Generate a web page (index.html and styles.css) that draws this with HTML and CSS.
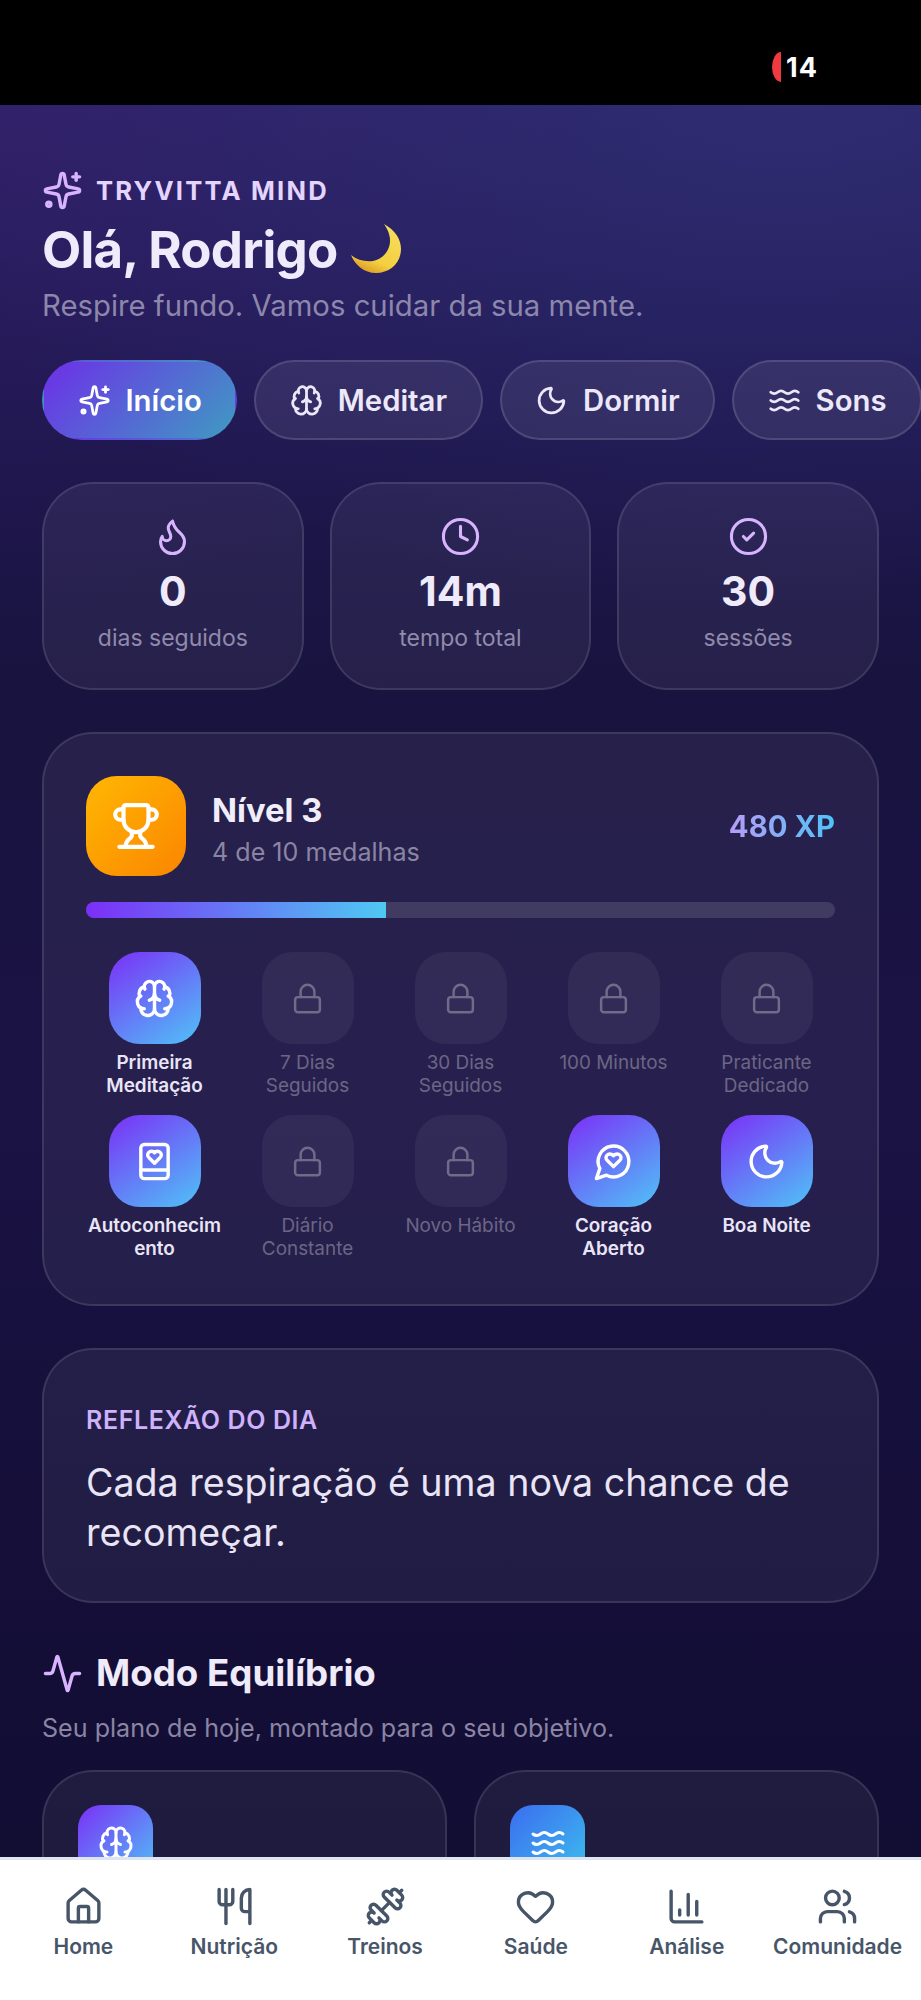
FILE: index.html
```html
<!DOCTYPE html>
<html lang="pt-BR">
<head>
<meta charset="utf-8">
<title>Tryvitta Mind</title>
<link rel="stylesheet" href="styles.css">
</head>
<body>
<svg class="sprite" aria-hidden="true">
  <symbol id="i-sparkles" viewBox="0 0 24 24"><path d="M11.017 2.814a1 1 0 0 1 1.966 0l1.051 5.558a2 2 0 0 0 1.594 1.594l5.558 1.051a1 1 0 0 1 0 1.966l-5.558 1.051a2 2 0 0 0-1.594 1.594l-1.051 5.558a1 1 0 0 1-1.966 0l-1.051-5.558a2 2 0 0 0-1.594-1.594l-5.558-1.051a1 1 0 0 1 0-1.966l5.558-1.051a2 2 0 0 0 1.594-1.594z"/><path d="M20 2v4"/><path d="M22 4h-4"/><circle cx="4" cy="20" r="1.2"/></symbol>
  <symbol id="i-brain" viewBox="0 0 24 24"><path d="M12 18V5"/><path d="M15 13a4.17 4.17 0 0 1-3-4 4.17 4.17 0 0 1-3 4"/><path d="M17.598 6.5A3 3 0 1 0 12 5a3 3 0 1 0-5.598 1.5"/><path d="M17.997 5.125a4 4 0 0 1 2.526 5.77"/><path d="M18 18a4 4 0 0 0 2-7.464"/><path d="M19.967 17.483A4 4 0 1 1 12 18a4 4 0 1 1-7.967-.517"/><path d="M6 18a4 4 0 0 1-2-7.464"/><path d="M6.003 5.125a4 4 0 0 0-2.526 5.77"/></symbol>
  <symbol id="i-moon" viewBox="0 0 24 24"><path d="M20.985 12.486a9 9 0 1 1-9.473-9.472c.405-.022.617.46.402.803a6 6 0 0 0 8.268 8.268c.344-.215.825-.004.803.401"/></symbol>
  <symbol id="i-waves" viewBox="0 0 24 24"><path d="M2 6c.6.5 1.2 1 2.5 1C7 7 7 5 9.5 5c2.6 0 2.4 2 5 2 2.5 0 2.5-2 5-2 1.3 0 1.9.5 2.5 1"/><path d="M2 12c.6.5 1.2 1 2.5 1 2.5 0 2.5-2 5-2 2.6 0 2.4 2 5 2 2.5 0 2.5-2 5-2 1.3 0 1.9.5 2.5 1"/><path d="M2 18c.6.5 1.2 1 2.5 1 2.5 0 2.5-2 5-2 2.6 0 2.4 2 5 2 2.5 0 2.5-2 5-2 1.3 0 1.9.5 2.5 1"/></symbol>
  <symbol id="i-flame" viewBox="0 0 24 24"><path d="M12 3q1 4 4 6.5t3 5.5a1 1 0 0 1-14 0 5 5 0 0 1 1-3 1 1 0 0 0 5 0c0-2-1.5-3-1.5-5q0-2 2.5-4"/></symbol>
  <symbol id="i-clock" viewBox="0 0 24 24"><circle cx="12" cy="12" r="10"/><path d="M12 6v6l4 2"/></symbol>
  <symbol id="i-check" viewBox="0 0 24 24"><circle cx="12" cy="12" r="10"/><path d="m9 12 2 2 4-4"/></symbol>
  <symbol id="i-trophy" viewBox="0 0 24 24"><path d="M10 14.66v1.626a2 2 0 0 1-.976 1.696A5 5 0 0 0 7 21.978"/><path d="M14 14.66v1.626a2 2 0 0 0 .976 1.696A5 5 0 0 1 17 21.978"/><path d="M18 9h1.5a1 1 0 0 0 0-5H18"/><path d="M4 22h16"/><path d="M6 9a6 6 0 0 0 12 0V3a1 1 0 0 0-1-1H7a1 1 0 0 0-1 1z"/><path d="M6 9H4.5a1 1 0 0 1 0-5H6"/></symbol>
  <symbol id="i-lock" viewBox="0 0 24 24"><rect width="18" height="11" x="3" y="11" rx="2" ry="2"/><path d="M7 11V7a5 5 0 0 1 10 0v4"/></symbol>
  <symbol id="i-book" viewBox="0 0 24 24"><rect x="4" y="2" width="16" height="20" rx="2"/><path d="M4 17h16"/><path d="M16 8.2A2.22 2.22 0 0 0 13.8 6c-.8 0-1.4.3-1.8.9-.4-.6-1-.9-1.8-.9A2.22 2.22 0 0 0 8 8.2c0 .6.3 1.2.8 1.6l3.2 3.2 3.2-3.2c.5-.4.8-1 .8-1.6Z"/></symbol>
  <symbol id="i-chat" viewBox="0 0 24 24"><path d="M7.9 20A9 9 0 1 0 4 16.1L2 22Z"/><path d="M16.4 9.8A2.22 2.22 0 0 0 14.2 7.6c-.9 0-1.6.4-2.2 1-.6-.6-1.3-1-2.2-1a2.22 2.22 0 0 0-2.2 2.2c0 .6.3 1.2.8 1.6l3.6 3.6 3.6-3.6c.5-.4.8-1 .8-1.6Z"/></symbol>
  <symbol id="i-activity" viewBox="0 0 24 24"><path d="M22 12h-2.48a2 2 0 0 0-1.93 1.46l-2.35 8.36a.25.25 0 0 1-.48 0L9.24 2.18a.25.25 0 0 0-.48 0l-2.35 8.36A2 2 0 0 1 4.49 12H2"/></symbol>
  <symbol id="i-house" viewBox="0 0 24 24"><path d="M15 21v-8a1 1 0 0 0-1-1h-4a1 1 0 0 0-1 1v8"/><path d="M3 10a2 2 0 0 1 .709-1.528l7-5.999a2 2 0 0 1 2.582 0l7 5.999A2 2 0 0 1 21 10v9a2 2 0 0 1-2 2H5a2 2 0 0 1-2-2z"/></symbol>
  <symbol id="i-utensils" viewBox="0 0 24 24"><path d="M3 2v7c0 1.1.9 2 2 2h4a2 2 0 0 0 2-2V2"/><path d="M7 2v20"/><path d="M21 15V2a5 5 0 0 0-5 5v6c0 1.1.9 2 2 2h3Zm0 0v7"/></symbol>
  <symbol id="i-dumbbell" viewBox="0 0 24 24"><path d="M17.596 12.768a2 2 0 1 0 2.829-2.829l-1.768-1.767a2 2 0 0 0 2.828-2.829l-2.828-2.828a2 2 0 0 0-2.829 2.828l-1.767-1.768a2 2 0 1 0-2.829 2.829z"/><path d="m2.5 21.5 1.4-1.4"/><path d="m20.1 3.9 1.4-1.4"/><path d="M5.343 21.485a2 2 0 1 0 2.829-2.828l1.767 1.768a2 2 0 1 0 2.829-2.829l-6.364-6.364a2 2 0 1 0-2.829 2.829l1.768 1.767a2 2 0 0 0-2.828 2.829z"/><path d="m9.6 14.4 4.8-4.8"/></symbol>
  <symbol id="i-heart" viewBox="0 0 24 24"><path d="M2 9.5a5.5 5.5 0 0 1 9.591-3.676.56.56 0 0 0 .818 0A5.49 5.49 0 0 1 22 9.5c0 2.29-1.5 4-3 5.5l-5.492 5.313a2 2 0 0 1-3 .019L5 15c-1.5-1.5-3-3.2-3-5.5"/></symbol>
  <symbol id="i-chart" viewBox="0 0 24 24"><path d="M3 3v16a2 2 0 0 0 2 2h16"/><path d="M18 17V9"/><path d="M13 17V5"/><path d="M8 17v-3"/></symbol>
  <symbol id="i-users" viewBox="0 0 24 24"><path d="M16 21v-2a4 4 0 0 0-4-4H6a4 4 0 0 0-4 4v2"/><path d="M16 3.128a4 4 0 0 1 0 7.744"/><path d="M22 21v-2a4 4 0 0 0-3-3.87"/><circle cx="9" cy="7" r="4"/></symbol>
  <linearGradient id="moon-fill" x1="0.7" y1="0.1" x2="0.3" y2="1"><stop offset="0" stop-color="#f6dc5a"/><stop offset="0.7" stop-color="#f5cf3f"/><stop offset="1" stop-color="#d99a26"/></linearGradient>
</svg>

<div class="app">
  <header class="status">
    <span class="status-rec"></span>
    <span class="status-num">14</span>
  </header>

  <main class="screen">
    <div class="eyebrow">
      <svg class="ic ic-lg"><use href="#i-sparkles"/></svg>
      <span>TRYVITTA MIND</span>
    </div>
    <h1 class="hello">Olá, Rodrigo<svg class="moon-emoji" viewBox="0 0 50 50" role="img" aria-label="lua"><path fill="url(#moon-fill)" d="M33 0C44 6 50 15 50 25C50 39 39 49 25 49C13 49 4 41 0 31C6 36 14 38 22 37C34 35 42 22 38 10C37 6 35 3 33 0Z"/></svg></h1>
    <p class="tagline">Respire fundo. Vamos cuidar da sua mente.</p>

    <nav class="pills">
      <a class="pill pill-active"><svg class="ic ic-md"><use href="#i-sparkles"/></svg>Início</a>
      <a class="pill"><svg class="ic ic-md"><use href="#i-brain"/></svg>Meditar</a>
      <a class="pill"><svg class="ic ic-md"><use href="#i-moon"/></svg>Dormir</a>
      <a class="pill"><svg class="ic ic-md"><use href="#i-waves"/></svg>Sons</a>
    </nav>

    <section class="stats">
      <div class="card stat"><svg class="ic ic-lg thin"><use href="#i-flame"/></svg><strong>0</strong><span>dias seguidos</span></div>
      <div class="card stat"><svg class="ic ic-lg thin"><use href="#i-clock"/></svg><strong>14m</strong><span>tempo total</span></div>
      <div class="card stat"><svg class="ic ic-lg thin"><use href="#i-check"/></svg><strong>30</strong><span>sessões</span></div>
    </section>

    <section class="card level">
      <div class="level-head">
        <div class="trophy"><svg class="ic ic-xl"><use href="#i-trophy"/></svg></div>
        <div class="level-info">
          <h2>Nível 3</h2>
          <p>4 de 10 medalhas</p>
        </div>
        <span class="xp">480 XP</span>
      </div>
      <div class="bar"><div class="bar-fill"></div></div>
      <div class="badges">
        <div class="badge on"><div class="tile"><svg class="ic ic-lg"><use href="#i-brain"/></svg></div><span>Primeira Meditação</span></div>
        <div class="badge"><div class="tile"><svg class="ic ic-sm thin"><use href="#i-lock"/></svg></div><span>7 Dias Seguidos</span></div>
        <div class="badge"><div class="tile"><svg class="ic ic-sm thin"><use href="#i-lock"/></svg></div><span>30 Dias Seguidos</span></div>
        <div class="badge"><div class="tile"><svg class="ic ic-sm thin"><use href="#i-lock"/></svg></div><span>100 Minutos</span></div>
        <div class="badge"><div class="tile"><svg class="ic ic-sm thin"><use href="#i-lock"/></svg></div><span>Praticante Dedicado</span></div>
        <div class="badge on"><div class="tile"><svg class="ic ic-lg"><use href="#i-book"/></svg></div><span>Autoconhecimento</span></div>
        <div class="badge"><div class="tile"><svg class="ic ic-sm thin"><use href="#i-lock"/></svg></div><span>Diário Constante</span></div>
        <div class="badge"><div class="tile"><svg class="ic ic-sm thin"><use href="#i-lock"/></svg></div><span>Novo Hábito</span></div>
        <div class="badge on"><div class="tile"><svg class="ic ic-lg"><use href="#i-chat"/></svg></div><span>Coração Aberto</span></div>
        <div class="badge on"><div class="tile"><svg class="ic ic-lg"><use href="#i-moon"/></svg></div><span>Boa Noite</span></div>
      </div>
    </section>

    <section class="card reflection">
      <h3>REFLEXÃO DO DIA</h3>
      <p>Cada respiração é uma nova chance de recomeçar.</p>
    </section>

    <section class="plan">
      <h2 class="plan-title"><svg class="ic ic-lg"><use href="#i-activity"/></svg>Modo Equilíbrio</h2>
      <p class="plan-sub">Seu plano de hoje, montado para o seu objetivo.</p>
      <div class="plan-grid">
        <div class="card plan-card"><div class="plan-tile violet"><svg class="ic ic-plan"><use href="#i-brain"/></svg></div></div>
        <div class="card plan-card"><div class="plan-tile blue"><svg class="ic ic-plan"><use href="#i-waves"/></svg></div></div>
      </div>
    </section>
  </main>

  <footer class="tabbar">
    <a class="tab"><svg class="ic ic-lg"><use href="#i-house"/></svg>Home</a>
    <a class="tab"><svg class="ic ic-lg"><use href="#i-utensils"/></svg>Nutrição</a>
    <a class="tab"><svg class="ic ic-lg"><use href="#i-dumbbell"/></svg>Treinos</a>
    <a class="tab"><svg class="ic ic-lg"><use href="#i-heart"/></svg>Saúde</a>
    <a class="tab"><svg class="ic ic-lg"><use href="#i-chart"/></svg>Análise</a>
    <a class="tab"><svg class="ic ic-lg"><use href="#i-users"/></svg>Comunidade</a>
  </footer>
</div>
</body>
</html>
```

FILE: styles.css
```css
* { box-sizing: border-box; margin: 0; padding: 0; }
html, body { height: 2000px; overflow: hidden; }
body { font-family: "Inter", "Liberation Sans", sans-serif; background: #000; color: #fff; }

.sprite { width: 0; height: 0; display: block; overflow: hidden; }

.ic { fill: none; stroke: currentColor; stroke-width: 2; stroke-linecap: round; stroke-linejoin: round; flex: none; display: block; }
.ic-sm { width: 33px; height: 33px; }
.ic-md { width: 33px; height: 33px; }
.ic-lg { width: 41px; height: 41px; }
.ic-xl { width: 50px; height: 50px; }
.ic-plan { width: 36px; height: 36px; }
.thin { stroke-width: 1.8; }

.app { height: 2000px; display: flex; flex-direction: column; }

.status { height: 105px; flex: none; background: #000; display: flex; align-items: center; justify-content: flex-end; gap: 5px; padding: 30px 103px 0 0; }
.status-rec { width: 9px; height: 30px; background: #ef3a40; border-radius: 9px 0 0 9px / 15px 0 0 15px; margin-top: -1px; }
.status-num { font-size: 27px; font-weight: 700; line-height: 30px; letter-spacing: 1px; color: #fff; }

.screen {
  flex: 1; min-height: 0; overflow: hidden; padding: 65px 42px 0;
  background:
    radial-gradient(900px 500px at 85% 0, rgba(52, 56, 128, .5), rgba(52, 56, 128, 0) 100%),
    radial-gradient(600px 500px at 0 0, rgba(70, 30, 120, .25), rgba(70, 30, 120, 0) 100%),
    linear-gradient(180deg, #2a2064 0, #1f1850 300px, #19133f 580px, #1a1344 1000px, #150f3a 1400px, #120d33 1752px);
}

.eyebrow { display: flex; align-items: center; gap: 13px; height: 41px; color: #d8b4fe; }
.eyebrow span { font-size: 25.6px; font-weight: 700; letter-spacing: 2.2px; color: #e4d4fe; }

.hello { display: flex; align-items: center; font-size: 51px; font-weight: 700; line-height: 62px; margin-top: 8px; color: #efebfa; letter-spacing: -.8px; }
.moon-emoji { width: 50px; height: 50px; margin: -2px 0 0 14px; }

.tagline { font-size: 29.3px; line-height: 39px; margin-top: 5px; color: #8e87ac; }

.pills { display: flex; gap: 17px; margin-top: 35px; width: 900px; }
.pill { flex: none; height: 80px; display: flex; align-items: center; gap: 15px; padding: 0 33.5px; border-radius: 40px; border: 2px solid rgba(255, 255, 255, .13); background: rgba(255, 255, 255, .08); font-size: 29.3px; font-weight: 600; color: #ece8fa; }
.pill-active { border-color: transparent; background: linear-gradient(135deg, #6d2fe8, #3f9bc2); color: #fff; }

.card { border: 2px solid rgba(255, 255, 255, .11); background: rgba(255, 255, 255, .06); border-radius: 51px; }

.stats { display: grid; grid-template-columns: repeat(3, 1fr); gap: 26px; margin-top: 42px; }
.stat { height: 208px; display: flex; flex-direction: column; align-items: center; padding-top: 32px; color: #d8b4fe; }
.stat strong { font-size: 41px; font-weight: 700; line-height: 50px; margin-top: 9px; color: #efebfa; }
.stat span { font-size: 23px; line-height: 28px; margin-top: 8px; color: #918bab; }

.level { margin-top: 42px; padding: 42px; height: 574px; }
.level-head { display: flex; align-items: center; gap: 26px; }
.trophy { width: 100px; height: 100px; border-radius: 31px; background: linear-gradient(135deg, #ffb703, #fb8500); display: flex; align-items: center; justify-content: center; color: #fff; flex: none; }
.level-info { flex: 1; padding-top: 3px; }
.level-info h2 { font-size: 32.8px; line-height: 44px; font-weight: 700; color: #f1eefb; }
.level-info p { font-size: 25.1px; line-height: 32px; margin-top: 4px; color: #8b85a4; }
.xp { font-size: 29.3px; font-weight: 700; background: linear-gradient(90deg, #b79cf7, #4fc3f7); -webkit-background-clip: text; background-clip: text; color: transparent; }

.bar { height: 16px; margin-top: 26px; border-radius: 8px; background: rgba(255, 255, 255, .12); overflow: hidden; }
.bar-fill { width: 40%; height: 100%; background: linear-gradient(90deg, #7b2ff7, #4fc9f3); }

.badges { display: grid; grid-template-columns: repeat(5, 137px); column-gap: 16px; row-gap: 18px; margin-top: 34px; }
.badge { display: flex; flex-direction: column; align-items: center; gap: 7px; height: 145px; text-align: center; font-size: 18.9px; line-height: 23px; color: #6c6685; overflow-wrap: anywhere; }
.badge span { width: 100%; }
.tile { width: 92px; height: 92px; border-radius: 31px; background: rgba(255, 255, 255, .05); display: flex; align-items: center; justify-content: center; color: #716b89; flex: none; }
.badge.on { color: #e9e5f6; font-weight: 600; }
.badge.on .tile { background: linear-gradient(145deg, #7b2ff7, #4fc3f7); color: #fff; }

.reflection { margin-top: 42px; padding: 52px 42px 41px; height: 255px; }
.reflection h3 { font-size: 25px; line-height: 36px; font-weight: 600; letter-spacing: .6px; color: #cfb2fb; }
.reflection p { font-size: 37.6px; line-height: 50px; margin-top: 20px; color: #e9e5f6; }

.plan { margin-top: 45px; }
.plan-title { display: flex; align-items: center; gap: 13px; font-size: 36.7px; line-height: 50px; font-weight: 700; color: #efebfa; }
.plan-title .ic { color: #d8b4fe; }
.plan-sub { font-size: 25.1px; line-height: 36px; margin-top: 12px; color: #8b85a4; }
.plan-grid { display: grid; grid-template-columns: repeat(2, 1fr); gap: 27px; margin-top: 24px; }
.plan-card { height: 300px; padding: 33px 34px; }
.plan-tile { width: 75px; height: 75px; border-radius: 23px; display: flex; align-items: center; justify-content: center; color: #fff; }
.violet { background: linear-gradient(135deg, #7b2ff7, #4fc3f7); }
.blue { background: linear-gradient(135deg, #3b6cf0, #3cc0ee); }

.tabbar { flex: none; position: relative; height: 143px; background: #fff; border-top: 3px solid #dfe5ee; display: grid; grid-template-columns: repeat(6, 1fr); padding: 26px 8px 0; }
.tab { display: flex; flex-direction: column; align-items: center; gap: 6px; font-size: 21px; line-height: 28px; font-weight: 600; color: #475569; white-space: nowrap; }
```
